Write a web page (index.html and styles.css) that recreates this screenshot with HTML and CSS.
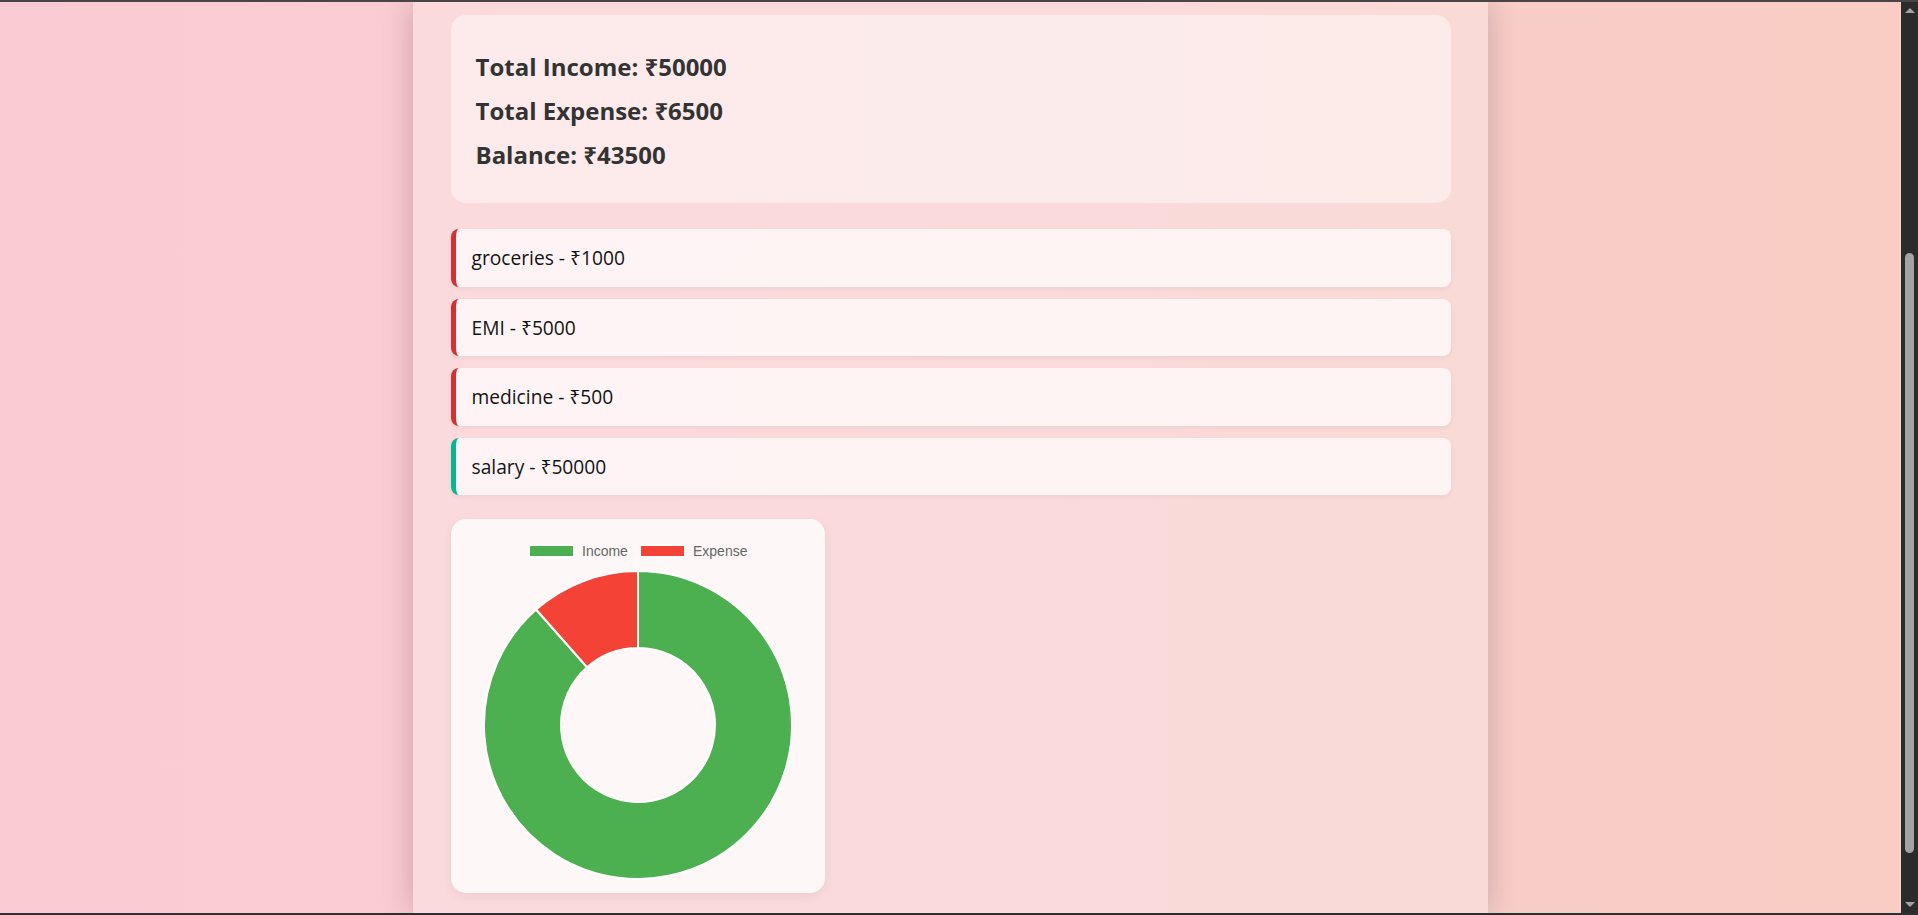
FILE: index.html
```html
<!DOCTYPE html>
<html lang="en">
<head>
<meta charset="utf-8">
<title>Expense Tracker</title>
<link rel="stylesheet" href="styles.css">
</head>
<body>
<div class="frame">
  <div class="edge edge-top"></div>
  <div class="viewport">
    <main class="page">
      <div class="container">
        <section class="summary">
          <p>Total Income: ₹50000</p>
          <p>Total Expense: ₹6500</p>
          <p>Balance: ₹43500</p>
        </section>
        <ul class="list">
          <li class="item expense">groceries - ₹1000</li>
          <li class="item expense">EMI - ₹5000</li>
          <li class="item expense">medicine - ₹500</li>
          <li class="item income">salary - ₹50000</li>
        </ul>
        <div class="chart-card">
          <svg class="chart" width="334" height="354" viewBox="0 0 334 354">
            <rect x="58" y="6" width="45" height="12" fill="#4caf50" stroke="#ffffff" stroke-width="2"/>
            <text x="111" y="16.5" class="legend-text">Income</text>
            <rect x="169" y="6" width="45" height="12" fill="#f44336" stroke="#ffffff" stroke-width="2"/>
            <text x="222" y="16.5" class="legend-text">Expense</text>
            <path d="M 167 32 A 154 154 0 1 1 65.11 70.52 L 116.06 128.26 A 77 77 0 1 0 167 109 Z" fill="#4caf50" stroke="#ffffff" stroke-width="2" stroke-linejoin="round"/>
            <path d="M 65.11 70.52 A 154 154 0 0 1 167 32 L 167 109 A 77 77 0 0 0 116.06 128.26 Z" fill="#f44336" stroke="#ffffff" stroke-width="2" stroke-linejoin="round"/>
          </svg>
        </div>
      </div>
    </main>
    <div class="scrollbar">
      <div class="sb-btn"><span class="arrow-up"></span></div>
      <div class="sb-track"><div class="sb-thumb"></div></div>
      <div class="sb-btn"><span class="arrow-down"></span></div>
    </div>
  </div>
  <div class="edge edge-bottom"></div>
</div>
</body>
</html>
```
FILE: styles.css
```css
html, body {
  margin: 0;
  padding: 0;
  height: 915px;
  overflow: hidden;
}

body {
  font-family: "Open Sans", "Noto Sans", "DejaVu Sans", sans-serif;
  color: #222;
}

.frame {
  display: flex;
  flex-direction: column;
  height: 915px;
}

.edge {
  height: 2px;
  flex: none;
}

.edge-top {
  background: #4a4348;
}

.edge-bottom {
  background: #2f2f2f;
}

.viewport {
  flex: 1;
  display: flex;
  min-height: 0;
}

.page {
  flex: 1;
  display: flex;
  justify-content: center;
  overflow: hidden;
  background: linear-gradient(to right, #fbcbd3 0%, #f9cdcc 60%, #f9cdc3 100%);
}

.container {
  width: 1075px;
  flex: none;
  box-sizing: border-box;
  padding: 13px 37.5px 0;
  background: rgba(255, 255, 255, 0.27);
  box-shadow: 0 0 30px rgba(0, 0, 0, 0.2);
}

.summary {
  background: rgba(255, 255, 255, 0.45);
  border-radius: 15px;
  padding: 24px 25px 20px;
}

.summary p {
  margin: 12px 0;
  font-size: 24px;
  line-height: 32px;
  font-weight: 700;
  color: #333;
}

.list {
  list-style: none;
  margin: 26px 0 0;
  padding: 0;
  display: flex;
  flex-direction: column;
  gap: 12px;
}

.item {
  background: rgba(255, 255, 255, 0.7);
  border-radius: 8px;
  border-left: 5px solid #d63031;
  padding: 16px;
  font-size: 19.2px;
  line-height: 25.5px;
  color: #141414;
  box-shadow: 0 2px 5px rgba(0, 0, 0, 0.05);
}

.item.income {
  border-left-color: #00b894;
}

.chart-card {
  margin-top: 24px;
  width: 374px;
  height: 374px;
  box-sizing: border-box;
  padding: 20px 20px 0;
  background: #fdf8f7;
  border-radius: 15px;
  box-shadow: 0 4px 12px rgba(0, 0, 0, 0.06);
}

.chart {
  display: block;
}

.legend-text {
  font-family: "Liberation Sans", Arial, sans-serif;
  font-size: 14px;
  fill: #666666;
}

.scrollbar {
  width: 17px;
  flex: none;
  background: #2b2b2b;
  display: flex;
  flex-direction: column;
}

.sb-btn {
  height: 17px;
  flex: none;
  display: flex;
  align-items: center;
  justify-content: center;
}

.arrow-up {
  width: 0;
  height: 0;
  border-left: 5px solid transparent;
  border-right: 5px solid transparent;
  border-bottom: 5px solid #a3a3a3;
}

.arrow-down {
  width: 0;
  height: 0;
  border-left: 5px solid transparent;
  border-right: 5px solid transparent;
  border-top: 5px solid #a3a3a3;
}

.sb-track {
  flex: 1;
  display: flex;
  justify-content: center;
}

.sb-thumb {
  width: 9px;
  height: 600px;
  margin-top: 234px;
  border-radius: 5px;
  background: #a3a3a3;
}
```
